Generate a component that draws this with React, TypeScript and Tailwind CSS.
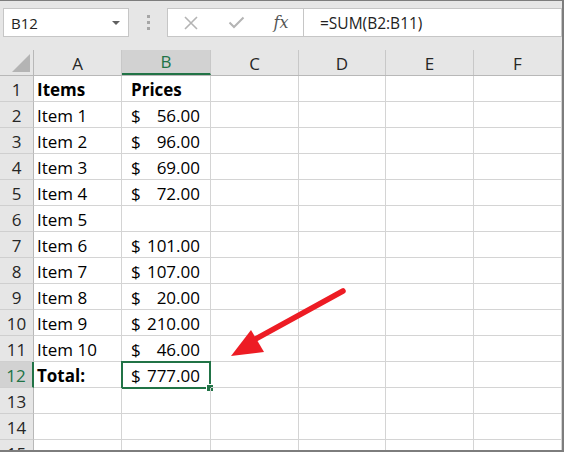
import React from 'react';

const cols = [
  { key: 'A', w: 'w-[88px]' },
  { key: 'B', w: 'w-[89px]' },
  { key: 'C', w: 'w-[88px]' },
  { key: 'D', w: 'w-[87px]' },
  { key: 'E', w: 'w-[88px]' },
  { key: 'F', w: 'w-[88px]' },
];

type Row = { a?: string; b?: string; bold?: boolean; money?: boolean };

const rows: Row[] = [
  { a: 'Items', b: 'Prices', bold: true },
  { a: 'Item 1', b: '56.00', money: true },
  { a: 'Item 2', b: '96.00', money: true },
  { a: 'Item 3', b: '69.00', money: true },
  { a: 'Item 4', b: '72.00', money: true },
  { a: 'Item 5' },
  { a: 'Item 6', b: '101.00', money: true },
  { a: 'Item 7', b: '107.00', money: true },
  { a: 'Item 8', b: '20.00', money: true },
  { a: 'Item 9', b: '210.00', money: true },
  { a: 'Item 10', b: '46.00', money: true },
  { a: 'Total:', b: '777.00', money: true, bold: true },
  {},
  {},
  {},
];

function FormulaIcons() {
  return (
    <div className="flex h-full w-[137px] items-center border border-[#c6c6c6] bg-white">
      <div className="flex w-[45px] justify-center">
        <svg width="16" height="14" viewBox="0 0 16 14">
          <path d="M2 1 L14 13 M14 1 L2 13" stroke="#b4b4b4" strokeWidth="1.6" fill="none" />
        </svg>
      </div>
      <div className="flex w-[46px] justify-center">
        <svg width="17" height="13" viewBox="0 0 17 13">
          <path d="M1.5 6.5 L6 11 L15.5 1.5" stroke="#b4b4b4" strokeWidth="2" fill="none" />
        </svg>
      </div>
      <div className="flex w-[44px] justify-center font-['DejaVu_Serif',serif] text-[16px] italic leading-none text-[#555]">
        fx
      </div>
    </div>
  );
}

export default function App() {
  return (
    <div className="relative h-[452px] w-[564px] overflow-hidden border-t border-r-2 border-b-2 border-[#7d7d7d] bg-white font-['Open_Sans',sans-serif] text-black">
      {/* toolbar */}
      <div className="flex h-[49px] items-start bg-[#e6e6e6] pt-[7px] pl-[3px]">
        <div className="flex h-[29px] w-[126px] items-center justify-between border border-[#c6c6c6] bg-white pl-[7px] pr-[8px]">
          <span className="text-[15px] leading-[20px] text-[#222]">B12</span>
          <span className="h-0 w-0 border-x-[4px] border-t-[4px] border-x-transparent border-t-[#606060]" />
        </div>
        <div className="flex h-[29px] w-[38px] flex-col items-center justify-center gap-[3px]">
          <span className="h-[3px] w-[3px] bg-[#a6a6a6]" />
          <span className="h-[3px] w-[3px] bg-[#a6a6a6]" />
          <span className="h-[3px] w-[3px] bg-[#a6a6a6]" />
        </div>
        <div className="flex h-[29px] flex-1">
          <FormulaIcons />
          <div className="flex h-full flex-1 items-center border-y border-r border-[#c6c6c6] bg-white pl-[16px]">
            <span className="text-[15.5px] leading-[20px] text-[#222]">=SUM(B2:B11)</span>
          </div>
        </div>
      </div>

      {/* column header */}
      <div className="flex h-[26px] border-b border-[#b8b8b8] bg-[#e6e6e6]">
        <div className="relative w-[34px] border-r border-[#b8b8b8]">
          <svg className="absolute right-[2px] bottom-[2px]" width="20" height="20" viewBox="0 0 20 20">
            <polygon points="19,1 19,19 1,19" fill="#b4b4b4" />
          </svg>
        </div>
        {cols.map((c) =>
          c.key === 'B' ? (
            <div
              key={c.key}
              className={`${c.w} flex items-end justify-center border-r border-b-2 border-r-[#c8c8c8] border-b-[#217346] bg-[#d2d2d2] text-[17px] leading-[22px] text-[#217346]`}
            >
              {c.key}
            </div>
          ) : (
            <div
              key={c.key}
              className={`${c.w} flex items-end justify-center border-r border-[#c8c8c8] text-[17px] leading-[22px] text-[#262626]`}
            >
              {c.key}
            </div>
          )
        )}
      </div>

      {/* rows */}
      {rows.map((r, i) => {
        const n = i + 1;
        const sel = n === 12;
        return (
          <div key={n} className="flex h-[26px]">
            <div
              className={`flex w-[34px] items-end justify-center border-b border-b-[#cfcfcf] text-[17px] leading-[22px] ${
                sel
                  ? 'border-r-2 border-r-[#217346] bg-[#d2d2d2] text-[#217346]'
                  : 'border-r border-r-[#b8b8b8] bg-[#e6e6e6] text-[#262626]'
              }`}
            >
              {n}
            </div>
            {cols.map((c) => {
              let content: React.ReactNode = null;
              if (c.key === 'A' && r.a) {
                content = <span className={`pl-[3px] ${r.bold ? 'font-bold' : ''}`}>{r.a}</span>;
              }
              if (c.key === 'B' && r.b) {
                content = r.money ? (
                  <div className="flex w-full justify-between pl-[9px] pr-[10px]">
                    <span>$</span>
                    <span>{r.b}</span>
                  </div>
                ) : (
                  <span className="pl-[9px] font-bold">{r.b}</span>
                );
              }
              return (
                <div
                  key={c.key}
                  className={`${c.w} relative flex items-end border-r border-b border-[#d4d4d4] text-[17px] leading-[22px]`}
                >
                  {content}
                  {sel && c.key === 'B' && (
                    <div className="absolute -top-[1px] -left-[1px] h-[28px] w-[90px] border-2 border-[#217346]">
                      <span className="absolute -right-[5px] -bottom-[5px] h-[8px] w-[8px] border border-white bg-[#217346]" />
                    </div>
                  )}
                </div>
              );
            })}
          </div>
        );
      })}

      {/* annotation arrow */}
      <svg className="pointer-events-none absolute top-0 left-0" width="564" height="452" viewBox="0 1 564 452">
        <line x1="343" y1="291" x2="252" y2="341" stroke="#ed1c24" strokeWidth="5.5" strokeLinecap="round" />
        <polygon points="231,356 251,330 264,352" fill="#ed1c24" />
      </svg>
    </div>
  );
}
